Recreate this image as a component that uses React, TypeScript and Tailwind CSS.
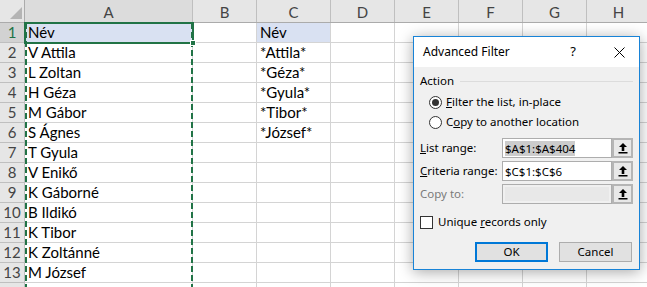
import React from "react";

const cols = [
  { l: "A", w: "w-[168px]" },
  { l: "B", w: "w-[64px]" },
  { l: "C", w: "w-[74px]" },
  { l: "D", w: "w-[64px]" },
  { l: "E", w: "w-[64px]" },
  { l: "F", w: "w-[64px]" },
  { l: "G", w: "w-[64px]" },
  { l: "H", w: "w-[64px]" },
];

const colA = ["Név", "V Attila", "L Zoltan", "H Géza", "M Gábor", "S Ágnes", "T Gyula", "V Enikő", "K Gáborné", "B Ildikó", "K Tibor", "K Zoltánné", "M József", ""];
const colC = ["Név", "*Attila*", "*Géza*", "*Gyula*", "*Tibor*", "*József*"];

const UpArrow = () => (
  <svg width="10" height="12" viewBox="0 0 10 12">
    <path d="M5 1 L9 5 L6.3 5 L6.3 9 L3.7 9 L3.7 5 L1 5 Z" fill="#000" />
    <rect x="0.5" y="10" width="9" height="1.5" fill="#000" />
  </svg>
);

const RangeField = ({ label, value, selected, disabled }: { label: React.ReactNode; value: string; selected?: boolean; disabled?: boolean }) => (
  <div className="flex items-center h-[20px] mt-[3px] first:mt-0">
    <div className={`w-[82px] ${disabled ? "text-[#7a7a7a]" : "text-black"}`}>{label}</div>
    <div className={`w-[110px] h-[20px] border border-[#adadad] ${disabled ? "bg-[#f0f0f0]" : "bg-white"} flex items-center px-[2px]`}>
      {disabled ? (
        <div className="w-full h-[14px] bg-[#e8e8e8]" />
      ) : (
        <span className={selected ? "bg-[#cccccc] leading-[15px]" : "leading-[15px]"}>{value}</span>
      )}
    </div>
    <div className="w-[21px] h-[20px] border-2 border-[#b5b5b5] bg-[#e8e8e8] flex items-center justify-center">
      <UpArrow />
    </div>
  </div>
);

const Dialog = () => (
  <div
    className="absolute left-[413px] top-[36px] w-[227px] h-[234px] border border-[#1883d7] bg-[#f0f0f0] shadow-[0_2px_14px_rgba(0,0,0,0.35)] text-[11.5px] text-black"
    style={{ fontFamily: '"Noto Sans", "Open Sans", sans-serif' }}
  >
    <div className="h-[30px] bg-white flex items-center pl-[9px] pr-[14px] text-[12px]">
      <span className="flex-1">Advanced Filter</span>
      <span className="mr-[38px] text-[13px]">?</span>
      <svg width="11" height="11" viewBox="0 0 11 11">
        <path d="M0.5 0.5 L10.5 10.5 M10.5 0.5 L0.5 10.5" stroke="#000" strokeWidth="1" />
      </svg>
    </div>
    <div className="pl-[6px] pr-[6px] pt-[6px]">
      <div className="flex items-center h-[16px]">
        <span>Action</span>
        <div className="flex-1 h-px bg-[#dcdcdc] ml-[6px]" />
      </div>
      <div className="flex items-center h-[16px] mt-[5px] pl-[9px]">
        <div className="w-[13px] h-[13px] rounded-full border border-[#333] bg-white flex items-center justify-center">
          <div className="w-[7px] h-[7px] rounded-full bg-[#333]" />
        </div>
        <span className="ml-[4px]"><u>F</u>ilter the list, in-place</span>
      </div>
      <div className="flex items-center h-[16px] mt-[4px] pl-[9px]">
        <div className="w-[13px] h-[13px] rounded-full border border-[#333] bg-white" />
        <span className="ml-[4px]">C<u>o</u>py to another location</span>
      </div>
      <div className="mt-[8px] flex flex-col">
        <RangeField label={<><u>L</u>ist range:</>} value="$A$1:$A$404" selected />
        <RangeField label={<><u>C</u>riteria range:</>} value="$C$1:$C$6" />
        <RangeField label="Copy to:" value="" disabled />
      </div>
      <div className="flex items-center h-[14px] mt-[11px]">
        <div className="w-[13px] h-[13px] border border-[#333] bg-white" />
        <span className="ml-[5px]">Unique <u>r</u>ecords only</span>
      </div>
      <div className="flex justify-end gap-[11px] mt-[13px] pr-px">
        <div className="w-[73px] h-[20px] border-2 border-[#0078d7] bg-[#e1e1e1] flex items-center justify-center">OK</div>
        <div className="w-[73px] h-[20px] border border-[#adadad] bg-[#e1e1e1] flex items-center justify-center">Cancel</div>
      </div>
    </div>
  </div>
);

export default function App() {
  return (
    <div
      className="relative w-[647px] h-[287px] overflow-hidden bg-white text-[15px] text-black"
      style={{ fontFamily: 'Lato, "Liberation Sans", sans-serif' }}
    >
      {/* column headers */}
      <div className="flex h-[23px] bg-[#e6e6e6] border-b border-[#ababab]">
        <div className="relative w-[25px] shrink-0 border-r border-[#ababab]">
          <svg className="absolute left-[10px] top-[7px]" width="12" height="12" viewBox="0 0 12 12">
            <path d="M12 0 L12 12 L0 12 Z" fill="#b4b4b4" />
          </svg>
        </div>
        {cols.map((c) => (
          <div
            key={c.l}
            className={`${c.w} shrink-0 flex items-center justify-center text-[#444] border-r border-[#bfbfbf] pt-[3px] ${c.l === "A" ? "bg-[#dcdcdc]" : ""}`}
          >
            {c.l}
          </div>
        ))}
      </div>
      {/* rows */}
      {colA.map((a, i) => (
        <div key={i} className="flex h-[20px]">
          <div
            className={`w-[25px] shrink-0 flex items-center justify-center border-r border-b border-[#bfbfbf] ${i === 0 ? "bg-[#d2d2d2] text-[#217346]" : "bg-[#e6e6e6] text-[#444]"}`}
          >
            {i < 13 ? i + 1 : ""}
          </div>
          {cols.map((c) => {
            const txt = c.l === "A" ? a : c.l === "C" ? colC[i] ?? "" : "";
            const hl = i === 0 && (c.l === "A" || c.l === "C");
            return (
              <div
                key={c.l}
                className={`${c.w} shrink-0 flex items-center px-[3px] border-r border-b border-[#d4d4d4] whitespace-nowrap ${hl ? "bg-[#d9e1f2]" : ""}`}
              >
                {txt}
              </div>
            );
          })}
        </div>
      ))}

      {/* copy marquee on column A */}
      <div className="absolute left-[25px] top-[23px] w-[2px] h-[270px] bg-[repeating-linear-gradient(to_bottom,#217346_0_6px,transparent_6px_9px)]" />
      <div className="absolute left-[191px] top-[23px] w-[2px] h-[270px] bg-[repeating-linear-gradient(to_bottom,#217346_0_6px,transparent_6px_9px)]" />
      {/* active cell */}
      <div className="absolute left-[24px] top-[22px] w-[170px] h-[22px] border-2 border-[#217346]" />
      <div className="absolute left-[190px] top-[40px] w-[6px] h-[6px] bg-[#217346] border border-white" />

      <Dialog />
    </div>
  );
}
